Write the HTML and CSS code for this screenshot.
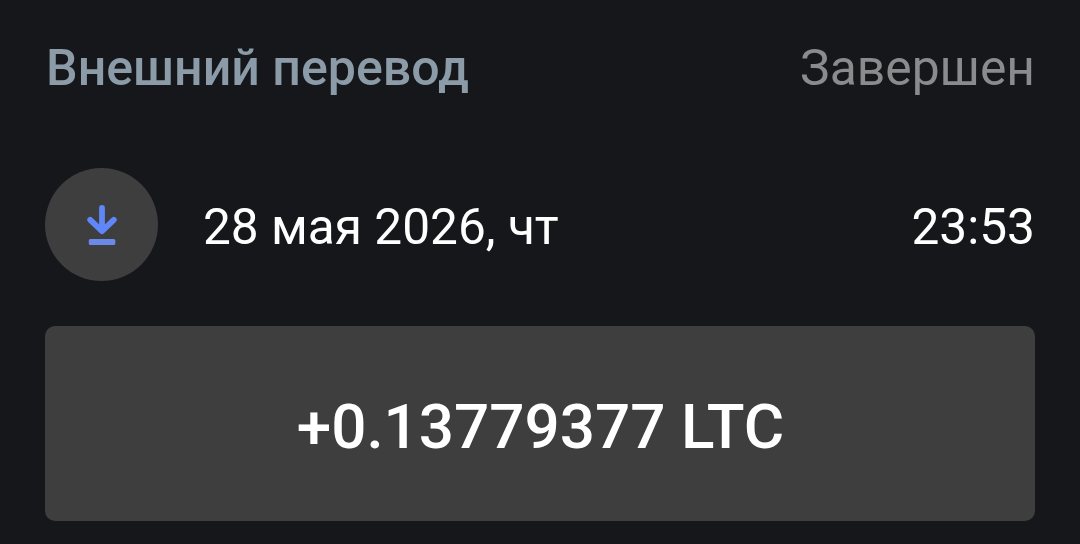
FILE: index.html
```html
<!DOCTYPE html>
<html lang="ru">
<head>
<meta charset="UTF-8">
<title>Внешний перевод</title>
<link rel="stylesheet" href="styles.css">
</head>
<body>
<div class="card">
    <div class="head">
        <h2 class="title">Внешний перевод</h2>
        <span class="status">Завершен</span>
    </div>
    <div class="info">
        <div class="icon">
            <svg width="40" height="44" viewBox="0 0 40 44">
                <path d="M20 5V27.5M8.2 16.8L20 28.2L31.8 16.8" fill="none" stroke="#5f87f8" stroke-width="5.8" stroke-linecap="round" stroke-linejoin="round"/>
                <rect x="6.8" y="36" width="26.5" height="6" rx="1.5" fill="#6a89e9"/>
            </svg>
        </div>
        <span class="date">28 мая 2026, чт</span>
        <span class="time">23:53</span>
    </div>
    <div class="amount">+0.13779377 LTC</div>
</div>
</body>
</html>
```

FILE: styles.css
```css
*{margin: 0;padding: 0;box-sizing: border-box;}
body{background: #16171b;font-family: Roboto, sans-serif;color: #fff;}
.card{height: 544px;padding: 39px 45px 0;overflow: hidden;}
.head{display: flex;justify-content: space-between;height: 60px;line-height: 58px;font-size: 49.8px;}
.title{font-size: 50.1px;font-weight: 500;color: #8b9ba8;padding-left: 1px;}
.status{color: #8b8b8d;}
.info{display: flex;align-items: center;height: 113px;margin-top: 69px;font-size: 49.6px;}
.icon{display: flex;align-items: center;justify-content: center;width: 113px;height: 113px;border-radius: 50%;background: #3e3e3e;}
.date{margin-left: 45px;padding-top: 5px;}
.time{margin-left: auto;padding-top: 5px;}
.amount{height: 195px;margin-top: 45px;padding-left: 1px;border-radius: 10px;background: #3e3e3e;font-size: 62px;font-weight: 500;line-height: 201px;text-align: center;}
```
